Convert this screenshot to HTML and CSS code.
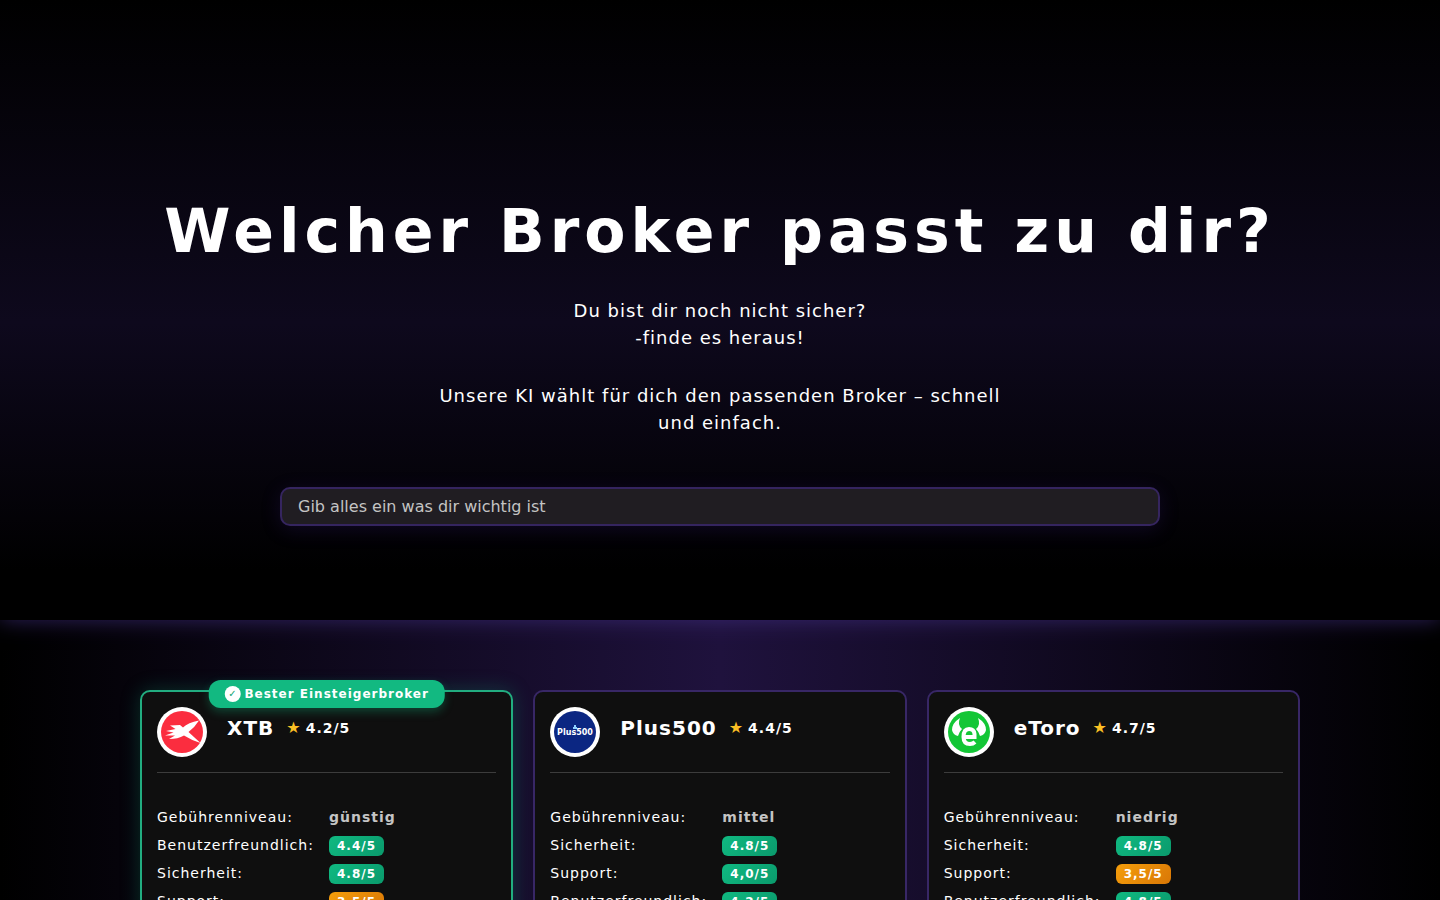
FILE: index.html
```
<!DOCTYPE html>
<html lang="de">
<head>
  <meta charset="UTF-8">
  <meta name="viewport" content="width=device-width, initial-scale=1.0">
  <title>Welcher Broker passt zu dir?</title>
  <link rel="stylesheet" href="styles.css">
</head>
<body>
  <header class="hero">
    <h1>Welcher Broker passt zu dir?</h1>
    <p class="intro">Du bist dir noch nicht sicher?<br>-finde es heraus!</p>
    <p class="intro">Unsere KI wählt für dich den passenden Broker – schnell und einfach.</p>
    <form class="search">
      <input type="text" id="wish" placeholder="Gib alles ein was dir wichtig ist" aria-label="Gib alles ein was dir wichtig ist">
    </form>
  </header>

  <main class="brokers">
    <div class="broker-grid">

      <!-- XTB -->
      <article class="card best">
        <div class="ribbon"><span class="check">✓</span>Bester Einsteigerbroker</div>
        <div class="card-header">
          <svg class="logo" viewBox="0 0 50 50" aria-hidden="true">
            <circle cx="25" cy="25" r="25" fill="#fff"/>
            <circle cx="25" cy="25" r="21" fill="#fb2d3f"/>
            <path fill="#fff" d="M13 18.500L23 18L26 20.500Q31 15.500 42 13.500Q38 20 31.500 25L43.500 36Q34 33 27 28.500Q21 32 12 32L18 28.500L8 28.500L16.500 25.500L9 24L18.500 22Z"/>
          </svg>
          <h2>XTB</h2>
          <span class="rating"><span class="star">★</span>4.2/5</span>
        </div>
        <dl class="facts">
          <div class="row"><dt>Gebührenniveau:</dt><dd>günstig</dd></div>
          <div class="row"><dt>Benutzerfreundlich:</dt><dd><span class="score">4.4/5</span></dd></div>
          <div class="row"><dt>Sicherheit:</dt><dd><span class="score">4.8/5</span></dd></div>
          <div class="row"><dt>Support:</dt><dd><span class="score mid">3.5/5</span></dd></div>
        </dl>
      </article>

      <!-- Plus500 -->
      <article class="card">
        <div class="card-header">
          <svg class="logo" viewBox="0 0 50 50" aria-hidden="true">
            <circle cx="25" cy="25" r="25" fill="#fff"/>
            <circle cx="25" cy="25" r="21" fill="#0b2682"/>
            <text class="logo-text" x="25" y="28" text-anchor="middle">Plus500</text>
            <path fill="#8fd0ff" d="M24 18h2v2h1v2h-4v-2h1z"/>
          </svg>
          <h2>Plus500</h2>
          <span class="rating"><span class="star">★</span>4.4/5</span>
        </div>
        <dl class="facts">
          <div class="row"><dt>Gebührenniveau:</dt><dd>mittel</dd></div>
          <div class="row"><dt>Sicherheit:</dt><dd><span class="score">4.8/5</span></dd></div>
          <div class="row"><dt>Support:</dt><dd><span class="score">4,0/5</span></dd></div>
          <div class="row"><dt>Benutzerfreundlich:</dt><dd><span class="score">4.2/5</span></dd></div>
        </dl>
      </article>

      <!-- eToro -->
      <article class="card">
        <div class="card-header">
          <svg class="logo" viewBox="0 0 50 50" aria-hidden="true">
            <circle cx="25" cy="25" r="25" fill="#fff"/>
            <circle cx="25" cy="25" r="21" fill="#13c636"/>
            <path fill="#fff" d="M16 11Q8 16 8 23Q9 28 14 29Q15 25 18 22Q13 18 16 11Z"/>
            <path fill="#fff" d="M34 11Q42 16 42 23Q41 28 36 29Q35 25 32 22Q37 18 34 11Z"/>
            <path fill="none" stroke="#fff" stroke-width="4" d="M19 30H30.500V27Q30 22 25 22Q19.500 22 19.500 30Q19.500 37 26 37Q29 37 31 35"/>
          </svg>
          <h2>eToro</h2>
          <span class="rating"><span class="star">★</span>4.7/5</span>
        </div>
        <dl class="facts">
          <div class="row"><dt>Gebührenniveau:</dt><dd>niedrig</dd></div>
          <div class="row"><dt>Sicherheit:</dt><dd><span class="score">4.8/5</span></dd></div>
          <div class="row"><dt>Support:</dt><dd><span class="score mid">3,5/5</span></dd></div>
          <div class="row"><dt>Benutzerfreundlich:</dt><dd><span class="score">4.8/5</span></dd></div>
        </dl>
      </article>

    </div>
  </main>
</body>
</html>
```
FILE: styles.css
```
* {
  box-sizing: border-box;
  margin: 0;
  padding: 0;
}

body {
  background-color: #000;
  color: #fff;
  font-family: "DejaVu Sans", Verdana, sans-serif;
  font-size: 14px;
  letter-spacing: 1px;
}

/* hero */
.hero {
  /* keeps the glow above the broker section */
  position: relative;
  background: linear-gradient(to bottom, #000 0%, #0e091d 52%, #000 92%);
  box-shadow: 0 0 20px rgba(70, 50, 140, 0.65);
  display: flex;
  flex-direction: column;
  align-items: center;
  padding: 196px 20px 94px;
  text-align: center;
}

h1 {
  font-size: 60px;
  letter-spacing: 5px;
  line-height: 70px;
  margin-bottom: 31px;
}

.intro {
  font-size: 18px;
  line-height: 27px;
  max-width: 600px;
  margin-bottom: 31px;
}

.search {
  width: 100%;
  max-width: 880px;
  margin-top: 20px;
}

.search input {
  display: block;
  width: 100%;
  height: 39px;
  padding: 0 16px;
  background-color: #201d22;
  border: 2px solid #35255f;
  border-radius: 10px;
  box-shadow: 0 4px 20px rgba(70, 40, 150, 0.2);
  color: #fff;
  font-family: inherit;
  font-size: 16px;
}

.search input::placeholder {
  color: #c4c4c4;
}

/* broker list */
.brokers {
  background: linear-gradient(to right, #000 0%, #1f123d 50%, #000 100%);
  padding: 70px 20px 40px;
}

.broker-grid {
  display: grid;
  grid-template-columns: repeat(3, 1fr);
  gap: 20px;
  max-width: 1160px;
  margin: 0 auto;
}

.card {
  position: relative;
  background-color: #0f0f0f;
  border: 2px solid #382766;
  border-radius: 10px;
  padding: 15px;
}

.card.best {
  border-color: #22ad80;
  box-shadow: 0 0 20px rgba(16, 185, 129, 0.25);
}

/* sits over the top edge of the card */
.ribbon {
  position: absolute;
  top: -12px;
  left: 50%;
  transform: translateX(-50%);
  display: flex;
  align-items: center;
  gap: 4px;
  height: 28px;
  padding: 0 16px;
  background-color: #12b981;
  border-radius: 12px;
  box-shadow: 0 4px 10px rgba(16, 185, 129, 0.3);
  font-size: 12px;
  font-weight: bold;
  white-space: nowrap;
}

.check {
  width: 16px;
  height: 16px;
  background-color: #fff;
  border-radius: 50%;
  color: #12a574;
  font-size: 10px;
  letter-spacing: 0;
  line-height: 16px;
  text-align: center;
}

.card-header {
  display: flex;
  align-items: flex-start;
  padding-bottom: 15px;
  border-bottom: 1px solid #3c3c3c;
}

.logo {
  width: 50px;
  height: 50px;
  margin-right: 20px;
}

.logo-text {
  fill: #fff;
  font-size: 8px;
  font-weight: bold;
  letter-spacing: 0;
}

.card-header h2 {
  font-size: 20px;
  line-height: 42px;
  margin-right: 12px;
}

.rating {
  display: flex;
  gap: 4px;
  font-weight: bold;
  line-height: 42px;
}

.star {
  color: #fbbf24;
  font-size: 16px;
}

.facts {
  padding-top: 30px;
}

.row {
  display: flex;
  align-items: baseline;
  height: 28px;
  line-height: 28px;
}

.row dt {
  width: 172px;
}

.row dd {
  color: #c4c4c4;
  font-weight: bold;
}

.score {
  display: inline-block;
  padding: 3px 8px;
  background: linear-gradient(135deg, #10b981, #0a9a6c);
  border-radius: 6px;
  color: #fff;
  font-size: 12px;
  line-height: 14px;
}

.score.mid {
  background: linear-gradient(135deg, #f59e0b, #d97706);
}

@media (max-width: 900px) {
  .broker-grid {
    grid-template-columns: 1fr;
  }

  h1 {
    font-size: 40px;
    line-height: 50px;
  }
}
```
